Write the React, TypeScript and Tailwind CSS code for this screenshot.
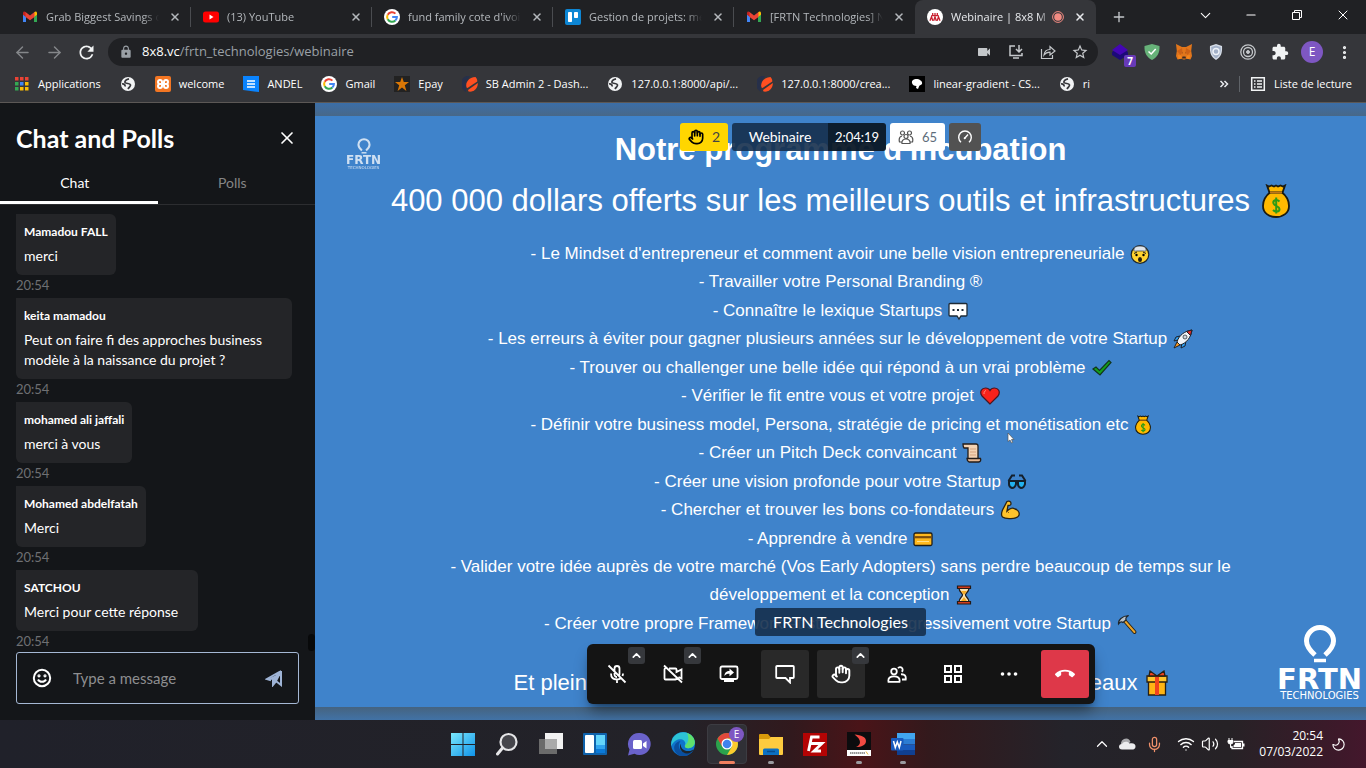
import React, { type ReactNode } from "react";
import {
  ArrowLeft,
  ArrowRight,
  ChevronDown,
  ChevronUp,
  Hand,
  Mic,
  Minus,
  Moon,
  MoreVertical,
  Plus,
  Volume2,
  Wifi,
  X,
} from "lucide-react";
import {
  MdCallEnd,
  MdExtension,
  MdLock,
  MdOutlineStarBorder,
  MdRefresh,
  MdVideocam,
} from "react-icons/md";

/* ---------- Favicons ---------- */

const GmailIcon = () => (
  <svg viewBox="0 0 16 16" className="size-4 shrink-0">
    <path d="M1 4v9h3V7.2L1.2 5z" fill="#4285f4" />
    <path d="M15 4v9h-3V7.2L14.8 5z" fill="#34a853" />
    <path d="M12 3.6V8l3-2.3V4c0-1.5-1.6-2-2.5-1z" fill="#fbbc04" />
    <path d="M4 3.6V8L1 5.700V4c0-1.500 1.600-2 2.500-1z" fill="#c5221f" />
    <path d="M3.500 3.100 8 6.500l4.500-3.400V8L8 11.200 3.500 8z" fill="#ea4335" />
  </svg>
);

const YoutubeIcon = () => (
  <svg viewBox="0 0 16 16" className="size-4 shrink-0">
    <rect x="0" y="2.500" width="16" height="11" rx="2.500" fill="#f00" />
    <path d="M6.500 5.600v4.800l4-2.400z" fill="#fff" />
  </svg>
);

const GoogleIcon = () => (
  <svg viewBox="0 0 16 16" className="size-4 shrink-0">
    <circle cx="8" cy="8" r="8" fill="#fff" />
    <g fill="none" strokeWidth="2">
      <path d="M11.400 4.600A4.900 4.900 0 0 0 3.700 5.800" stroke="#ea4335" />
      <path d="M3.700 5.700a4.900 4.900 0 0 0 0 4.600" stroke="#fbbc05" />
      <path d="M3.700 10.200a4.900 4.900 0 0 0 7.700 1.300" stroke="#34a853" />
      <path d="M11.300 11.600A4.800 4.800 0 0 0 12.900 8H8.200" stroke="#4285f4" />
    </g>
  </svg>
);

const TrelloIcon = () => (
  <svg viewBox="0 0 16 16" className="size-4 shrink-0">
    <rect width="16" height="16" rx="2" fill="#0d86d4" />
    <rect x="3" y="3" width="4" height="10" rx="0.800" fill="#fff" />
    <rect x="9" y="3" width="4" height="6" rx="0.800" fill="#fff" />
  </svg>
);

const EightIcon = () => (
  <svg viewBox="0 0 16 16" className="size-4 shrink-0">
    <circle cx="8" cy="8" r="8" fill="#fff" />
    <g stroke="#c8202f" strokeWidth="1.300" fill="none">
      <path d="M3 11.800l1.500-4 1.300 4M6.700 11.800l1.300-4 1.300 4M10.200 11.800l1.300-4 1.500 4" />
      <path d="M5.700 4v2.200M8 4v2.200M10.300 4v2.200M4.500 6.700h7" />
    </g>
  </svg>
);

const GlobeIcon = () => (
  <svg viewBox="0 0 16 16" className="size-4 shrink-0">
    <circle cx="8" cy="8" r="7" fill="#f1f3f4" />
    <path
      d="M9 2.800C6 3.500 4.500 5 5 6.500c1.500 1.500 5 .5 5.500 2.500.3 1.500-1.500 2-2.500 4M2 8c2-.5 3.500 1 3 2.500"
      fill="none"
      stroke="#35363a"
      strokeWidth="1.700"
    />
  </svg>
);

const AppsIcon = () => {
  const colors = ["#ea4335", "#ea4335", "#ea4335", "#34a853", "#4285f4", "#fbbc05", "#34a853", "#fbbc05", "#fbbc05"];
  return (
    <svg viewBox="0 0 16 16" className="size-4 shrink-0">
      {colors.map((c, i) => (
        <rect key={i} x={1 + (i % 3) * 5} y={1 + Math.floor(i / 3) * 5} width="3.500" height="3.500" fill={c} />
      ))}
    </svg>
  );
};

const XamppIcon = () => (
  <svg viewBox="0 0 16 16" className="size-4 shrink-0">
    <rect width="16" height="16" rx="2" fill="#f37623" />
    <path
      d="M6.500 8H5a2 2 0 1 1 2-2v4a2 2 0 1 1-2-2M9.500 8H11a2 2 0 1 0-2-2v4a2 2 0 1 0 2-2M6 8h4"
      fill="none"
      stroke="#fff"
      strokeWidth="2"
    />
  </svg>
);

const AndelIcon = () => (
  <svg viewBox="0 0 16 16" className="size-4 shrink-0">
    <path d="M0 0h16v16L0 14z" fill="#0a84ff" />
    <path d="M4 5h8M4 8h8M4 11h8" stroke="#fff" strokeWidth="1.500" />
  </svg>
);

const EpayIcon = () => (
  <svg viewBox="0 0 16 16" className="size-4 shrink-0">
    <rect width="16" height="16" fill="#222" />
    <path d="M8 1l1.800 5H15l-4.200 3.200L12.400 15 8 11.400 3.600 15l1.600-5.800L1 6h5.200z" fill="#d97706" />
  </svg>
);

const LeafIcon = () => (
  <svg viewBox="0 0 16 16" className="size-4 shrink-0">
    <path d="M3 14A7.500 7.500 0 0 1 6.500.5C4 4 3 9 3 14z" fill="#27304a" stroke="#27304a" strokeWidth="2" />
    <path d="M4.500 11.500C3 6 7 1.500 13.500 1c1.500 1.500 1.800 3 1.800 4.500L5.500 12z" fill="#ff4f21" />
    <path d="M6 14 15.800 7c.3 5-3.800 9.500-9.300 8.600z" fill="#ff4f21" />
  </svg>
);

const LambIcon = () => (
  <svg viewBox="0 0 16 16" className="size-4 shrink-0">
    <rect width="16" height="16" fill="#000" />
    <path d="M3 7c-.5-3 2-4 4.500-4S14 5 13 8c-1 1.500-3 1-3 2.500L9 13l-2-1 .5-2C5 10 3.500 9 3 7z" fill="#fff" />
  </svg>
);

/* ---------- Browser chrome ---------- */

type Tab = { icon: ReactNode; title: string; active?: boolean };

const tabs: Tab[] = [
  { icon: <GmailIcon />, title: "Grab Biggest Savings o" },
  { icon: <YoutubeIcon />, title: "(13) YouTube" },
  { icon: <GoogleIcon />, title: "fund family cote d'ivoi" },
  { icon: <TrelloIcon />, title: "Gestion de projets: mé" },
  { icon: <GmailIcon />, title: "[FRTN Technologies] N" },
  { icon: <EightIcon />, title: "Webinaire | 8x8 M", active: true },
];

const RecordDot = () => (
  <svg viewBox="0 0 12 12" className="size-3 shrink-0">
    <circle cx="6" cy="6" r="5.400" fill="none" stroke="#f28b82" />
    <circle cx="6" cy="6" r="3.800" fill="#f28b82" />
  </svg>
);

const TabStrip = () => (
  <div className="flex h-[34px] bg-[#202124] pl-[10px]">
    <div role="tablist" className="flex min-w-0">
      {tabs.map((t, i) => (
        <div
          key={i}
          className={
            t.active
              ? "flex w-[181px] items-center rounded-t-lg bg-[#35363a] pl-3 pr-2 text-[#e8eaed]"
              : "flex w-[181px] items-center pl-3 text-[#b4b8bc]"
          }
        >
          {t.icon}
          <button
            role="tab"
            aria-selected={!!t.active}
            className="ml-2 min-w-0 flex-1 whitespace-nowrap text-left text-[11px] leading-5 [mask-image:linear-gradient(to_right,black_86%,transparent)]"
          >
            {t.title}
          </button>
          {t.active && <RecordDot />}
          <button aria-label="Fermer l'onglet" className="ml-2 flex size-4 items-center justify-center">
            <X size={12} strokeWidth={3} />
          </button>
          {!t.active && <span className={i < 4 ? "ml-[7px] h-5 w-px bg-[#4a4c50]" : "ml-[7px] h-5 w-px"} />}
        </div>
      ))}
    </div>
    <button aria-label="Nouvel onglet" className="ml-[15px] text-[#c4c7ca]">
      <Plus size={16} />
    </button>
    <div className="ml-auto flex items-center pb-1 text-white">
      <button aria-label="Rechercher" className="flex w-[46px] justify-center"><ChevronDown size={17} strokeWidth={1.500} /></button>
      <button aria-label="Réduire" className="flex w-[46px] justify-center"><Minus size={14} strokeWidth={2} /></button>
      <button aria-label="Restaurer" className="flex w-[46px] justify-center">
        <svg viewBox="0 0 12 12" className="size-3" fill="none" stroke="currentColor">
          <path d="M1.500 3.500h7v7h-7zM3.500 3.500v-2h7v7h-2" />
        </svg>
      </button>
      <button aria-label="Fermer" className="flex w-[46px] justify-center"><X size={16} strokeWidth={1.500} /></button>
    </div>
  </div>
);

const DownloadIcon = () => (
  <svg viewBox="0 0 16 16" className="size-4" fill="none" stroke="currentColor" strokeWidth="1.500">
    <path d="M7 2H2v9.500h12V9M5 14h6M11 1v6.500M8 5l3 3 3-3" />
  </svg>
);

const ShareIcon = () => (
  <svg viewBox="0 0 16 16" className="size-4" fill="none" stroke="currentColor" strokeWidth="1.200">
    <path d="M1.500 5v9.500h11V11" />
    <path d="M4 11c.5-4 3-5.500 6-5.500V2.500l5 4.500-5 4V8.200C7.500 8.200 5.500 9 4 11z" />
  </svg>
);

const extensions: { name: string; icon: ReactNode }[] = [
  {
    name: "Calques",
    icon: (
      <span className="relative">
        <svg viewBox="0 0 18 18" className="size-[18px]">
          <path d="M1 9l8-5 8 5v3l-8 5-8-5z" fill="#1c0a78" />
          <path d="M1 7l8-6 8 6-8 5z" fill="#4406b4" />
        </svg>
        <span className="absolute -bottom-[6px] -right-[7px] flex h-3 w-3 items-center justify-center rounded-xs bg-[#673ab7] text-[10px] font-bold text-white">
          7
        </span>
      </span>
    ),
  },
  {
    name: "AdGuard",
    icon: (
      <svg viewBox="0 0 16 16" className="size-4">
        <path d="M8 0l7.500 2C16 9 13 13.500 8 16 3 13.500 0 9 .5 2z" fill="#67b279" />
        <path d="M4.500 7.500 7.200 10l4.500-5" fill="none" stroke="#fff" strokeWidth="1.500" />
      </svg>
    ),
  },
  {
    name: "MetaMask",
    icon: (
      <svg viewBox="0 0 16 16" className="size-4">
        <path d="M0 0l6 3h4l6-3-.8 7 .8 5-1.500 3.500-4-1-1.500 1H7l-1.500-1-4 1L0 12l.8-5z" fill="#e2761b" />
        <path d="M2 11l3 .5 1 3-3.500.8zM14 11l-3 .5-1 3 3.500.8z" fill="#f6851b" />
        <path d="M4.500 8l2 .5.300 1zM11.500 8l-2 .5-.3 1zM6.500 12.500h3l.500 2h-4z" fill="#3b2a24" />
        <path d="M1 7l5-3 .5 4.500-2 2.500zM15 7l-5-3-.5 4.500 2 2.500z" fill="#cd6116" />
      </svg>
    ),
  },
  {
    name: "Protection",
    icon: (
      <svg viewBox="0 0 16 16" className="size-4">
        <path d="M8 0l6 2c.5 7-1 11-6 14C3 13 1.500 9 2 2z" fill="#d5dce6" />
        <path d="M8 1.500l4.700 1.500c.3 5.500-1 9-4.700 11.300-3.700-2.300-5-5.800-4.700-11.300z" fill="#a3b1c8" />
        <circle cx="8" cy="7.500" r="3" fill="none" stroke="#eef2f8" strokeWidth="1.500" />
      </svg>
    ),
  },
  {
    name: "Cible",
    icon: (
      <svg viewBox="0 0 16 16" className="size-4" fill="none" stroke="#c4c7ca">
        <circle cx="8" cy="8" r="7.200" strokeWidth="1.300" />
        <circle cx="8" cy="8" r="4.500" strokeWidth="1.300" />
        <circle cx="8" cy="8" r="1.500" fill="#c4c7ca" />
      </svg>
    ),
  },
  { name: "Extensions", icon: <MdExtension size={18} className="text-[#f1f3f4]" /> },
];

const AddressRow = () => (
  <div className="flex h-9 items-center px-[6px] text-[#c4c7ca]">
    <button aria-label="Précédent" className="flex w-8 justify-center text-[#85878a]"><ArrowLeft size={19} strokeWidth={1.800} /></button>
    <button aria-label="Suivant" className="flex w-8 justify-center text-[#85878a]"><ArrowRight size={19} strokeWidth={1.800} /></button>
    <button aria-label="Actualiser" className="flex w-8 justify-center text-[#f1f3f4]"><MdRefresh size={21} /></button>
    <div className="mx-[6px] flex h-7 min-w-0 flex-1 items-center rounded-full bg-[#202124] pl-[11px] pr-[2px]">
      <MdLock size={14} className="shrink-0 text-[#9aa0a6]" />
      <a
        href="https://8x8.vc/frtn_technologies/webinaire"
        className="ml-[9px] flex-1 truncate text-[13px] text-[#9aa0a6]"
      >
        <span className="text-white">8x8.vc</span>/frtn_technologies/webinaire
      </a>
      <button aria-label="Caméra" className="flex w-8 justify-center"><MdVideocam size={16} /></button>
      <button aria-label="Installer" className="flex w-8 justify-center"><DownloadIcon /></button>
      <button aria-label="Partager" className="flex w-8 justify-center"><ShareIcon /></button>
      <button aria-label="Favori" className="flex w-8 justify-center"><MdOutlineStarBorder size={18} /></button>
    </div>
    {extensions.map((e) => (
      <button key={e.name} aria-label={e.name} className="flex w-8 justify-center">{e.icon}</button>
    ))}
    <button aria-label="Profil" className="flex w-8 justify-center">
      <span className="flex size-[22px] items-center justify-center rounded-full bg-[#7e57c2] text-[12px] text-white">E</span>
    </button>
    <button aria-label="Menu" className="flex w-8 justify-center text-[#f1f3f4]"><MoreVertical size={17} strokeWidth={2.500} /></button>
  </div>
);

const bookmarks: { icon: ReactNode; label: string }[] = [
  { icon: <AppsIcon />, label: "Applications" },
  { icon: <GlobeIcon />, label: "" },
  { icon: <XamppIcon />, label: "welcome" },
  { icon: <AndelIcon />, label: "ANDEL" },
  { icon: <GoogleIcon />, label: "Gmail" },
  { icon: <EpayIcon />, label: "Epay" },
  { icon: <LeafIcon />, label: "SB Admin 2 - Dash..." },
  { icon: <GlobeIcon />, label: "127.0.0.1:8000/api/..." },
  { icon: <LeafIcon />, label: "127.0.0.1:8000/crea..." },
  { icon: <LambIcon />, label: "linear-gradient - CS..." },
  { icon: <GlobeIcon />, label: "ri" },
];

const BookmarkBar = () => (
  <nav className="flex h-8 items-center gap-[19px] px-[14px] pb-1 text-[11px] text-white">
    {bookmarks.map((b, i) => (
      <a key={i} href="#" aria-label={b.label || "Favori"} className="flex items-center gap-2 whitespace-nowrap">
        {b.icon}
        {b.label && <span>{b.label}</span>}
      </a>
    ))}
    <div className="ml-auto flex items-center">
      <button aria-label="Autres favoris">
        <svg viewBox="0 0 10 10" className="size-[10px]" fill="none" stroke="#e8eaed" strokeWidth="1.500">
          <path d="M1.500 2l3 3-3 3M5.500 2l3 3-3 3" />
        </svg>
      </button>
      <span className="ml-[10px] h-4 w-px bg-[#5f6368]" />
      <a href="#" className="ml-[10px] flex items-center gap-2 whitespace-nowrap">
        <svg viewBox="0 0 16 16" className="size-4" fill="none" stroke="#f1f3f4" strokeWidth="1.500">
          <path d="M1.700 1.700h12.600v12.600H1.700zM4 5h1.500M4 8h1.500M4 11h1.500M7 5h5M7 8h5M7 11h5" />
        </svg>
        Liste de lecture
      </a>
    </div>
  </nav>
);

/* ---------- Chat ---------- */

const messages = [
  { name: "Mamadou FALL", text: "merci" },
  { name: "keita mamadou", text: "Peut on faire fi des approches business modèle à la naissance du projet ?" },
  { name: "mohamed ali jaffali", text: "merci à vous" },
  { name: "Mohamed abdelfatah", text: "Merci" },
  { name: "SATCHOU", text: "Merci pour cette réponse" },
];

const ChatPanel = () => (
  <aside className="flex min-h-0 w-[315px] shrink-0 flex-col bg-[#141619] font-[Lato,sans-serif] text-white">
    <header className="flex h-[70px] items-center justify-between pl-4 pr-[18px]">
      <h2 className="text-[25px] font-bold leading-8">Chat and Polls</h2>
      <button aria-label="Fermer le chat"><X size={20} strokeWidth={2} /></button>
    </header>
    <div role="tablist" className="flex h-8 border-b border-[#2c2d30] text-[14px]">
      <button role="tab" aria-selected className="w-1/2 border-b-[3px] border-white pb-[10px] pr-2 leading-5">Chat</button>
      <button role="tab" aria-selected={false} className="w-1/2 pb-[13px] pr-2 leading-5 text-[#858585]">Polls</button>
    </div>
    <div className="flex min-h-0 flex-1">
      <ul className="min-h-0 flex-1 overflow-hidden pl-4 pt-[9px]">
        {messages.map((m) => (
          <li key={m.name} className="flex flex-col items-start">
            <div className="max-w-[276px] rounded-r-md rounded-bl-md bg-[#242528] px-2 pb-[9px] pt-2">
              <p className="pb-1 text-[12px] font-bold leading-5">{m.name}</p>
              <p className="pr-3 text-[14px] leading-5">{m.text}</p>
            </div>
            <time className="h-[23px] text-[13px] leading-5 text-[#6f7073]">20:54</time>
          </li>
        ))}
      </ul>
      <div className="mb-px h-[17px] w-[7px] self-end rounded-full bg-[#08090a]" />
    </div>
    <form className="mx-4 mb-4 flex h-[52px] shrink-0 items-center rounded-[3px] border border-[#a5b8d4] px-[15px]">
      <button type="button" aria-label="Emoji">
        <svg viewBox="0 0 20 20" className="size-5" fill="none" stroke="#fff" strokeWidth="2">
          <circle cx="10" cy="10" r="8.200" />
          <path d="M6 11.500c1.500 3 6.500 3 8 0" />
          <circle cx="7" cy="7.800" r="0.600" />
          <circle cx="13" cy="7.800" r="0.600" />
        </svg>
      </button>
      <input
        aria-label="Message"
        placeholder="Type a message"
        className="ml-[21px] min-w-0 flex-1 bg-transparent text-[15px] outline-none placeholder:text-[#8e8e90]"
      />
      <button aria-label="Envoyer">
        <svg viewBox="0 0 18 18" className="size-[18px]" fill="none" stroke="#9fb4d6" strokeWidth="2">
          <path d="M16 2v14l-4.500-3.500M16 2 2 10l4 1.200M16 2 10.500 13 8 16V11z" />
          <path d="M2 10l6 1v5l2.500-3L14 5z" fill="#9fb4d6" stroke="none" />
        </svg>
      </button>
    </form>
  </aside>
);

/* ---------- Slide pictograms ---------- */

const MoneyBag = ({ large }: { large?: boolean }) => (
  <svg viewBox="0 0 28 34" className={large ? "h-[34px] w-7 shrink-0" : "h-5 w-4 shrink-0"} stroke="#1b1b10" strokeWidth="1.800">
    <path d="M8.500 8C2 13 1 19 1 22c0 7 6 11 13 11s13-4 13-11c0-3-1-9-7.500-14z" fill="#ffb900" />
    <path d="M5 1.500l2 1 2.500-1L12 2.500l2-1 2 1 2.500-1 2.500 1 2-1-2.500 7h-13z" fill="#ffb900" />
    <path d="M8 8.500h12" stroke="#c0741a" strokeWidth="1.500" />
    <path d="M17.500 17.500c-3-3-7-1-6 2s6 2.500 6 5.500-4 3.500-6.500 1M14.200 13.500v16" fill="none" stroke="#2c9a16" strokeWidth="2" />
  </svg>
);

const pictos = {
  mind: (
    <svg viewBox="0 0 20 20" className="size-5 shrink-0">
      <circle cx="10" cy="10.500" r="8.800" fill="#ffd22e" stroke="#1c2730" strokeWidth="1.200" />
      <path d="M4 5C4 1 16 1 16 5c1 3-2 2-3 2H7C6 7 3 8 4 5z" fill="#dfe5ec" stroke="#37434f" strokeWidth="0.800" />
      <path d="M4 9.500l3-1.500M16 9.500l-3-1.500" stroke="#1c1c1c" />
      <circle cx="6.500" cy="11" r="1.200" />
      <circle cx="13.500" cy="11" r="1.200" />
      <ellipse cx="10" cy="15.500" rx="2" ry="2.500" fill="#221a10" />
    </svg>
  ),
  speech: (
    <svg viewBox="0 0 20 20" className="size-5 shrink-0">
      <path d="M2 2.500h16q1 0 1 1V14q0 1-1 1h-5l-2 3-2-3H2q-1 0-1-1V3.500q0-1 1-1z" fill="#fff" stroke="#1d2a36" strokeWidth="1.300" />
      <path d="M4.500 8h2v2h-2zM9 8h2v2H9zM13.500 8h2v2h-2z" fill="#1d2a36" />
    </svg>
  ),
  rocket: (
    <svg viewBox="0 0 20 20" className="size-5 shrink-0" stroke="#1b222b" strokeWidth="1">
      <path d="M7 7 3 8l-2 4 4-1zM13 12l-1 5-4 2 1-5z" fill="#2f9df0" />
      <path d="M4 13l-3 6 6-3z" fill="#ff9a1f" />
      <path d="M4 13C6 6 12 2 19 1c-1 7-5 13-12 15z" fill="#f3f5f8" />
      <path d="M13.500 2.500 19 1l-1.500 5.500z" fill="#e92b2b" />
      <circle cx="12" cy="8" r="2" fill="#cfd6de" strokeWidth="0.700" />
    </svg>
  ),
  check: (
    <svg viewBox="0 0 20 20" className="size-5 shrink-0">
      <path d="M1 11l3-2 3.500 3.500L17 2.500l2 2L8 17z" fill="#14a01c" stroke="#12351c" strokeWidth="1.200" />
    </svg>
  ),
  heart: (
    <svg viewBox="0 0 20 20" className="size-5 shrink-0">
      <path d="M10 18 2 10C-1 5.500 2 2 5.500 2 8 2 9.500 3.500 10 4.500 10.500 3.500 12 2 14.500 2 18 2 21 5.500 18 10z" fill="#f8221c" stroke="#4a1620" strokeWidth="1.200" />
      <path d="M4 8c0-2 .5-3 2-3.500" stroke="#ff8d80" fill="none" />
    </svg>
  ),
  bag: <MoneyBag />,
  scroll: (
    <svg viewBox="0 0 20 20" className="size-5 shrink-0" stroke="#241c18" strokeWidth="1.300">
      <path d="M1 1h13q2 0 2 2v13H6V5H2Q1 4 1 1z" fill="#f4d3b4" />
      <path d="M5 15.500h13.500q1 3-2 3.500H7q-2-1-2-3.500z" fill="#e7b892" />
      <path d="M8 6h6M8 9h6M8 12h6" stroke="#c9936b" strokeWidth="0.700" />
    </svg>
  ),
  glasses: (
    <svg viewBox="0 0 20 20" className="size-5 shrink-0" stroke="#14202c" strokeWidth="2">
      <path d="M1.500 9 5 3.500h3M18.500 9 15 3.500h-3M1 9h18" fill="none" />
      <path d="M2 9h7v3q-1 4-4 4-3-1-3-4zM11 9h7v3q-1 4-4 4-3-1-3-4z" fill="#22b2ef" />
    </svg>
  ),
  arm: (
    <svg viewBox="0 0 20 20" className="size-5 shrink-0">
      <path d="M7 1.500c2-1 4 0 4 2s-1 2-3 2L7 11c2-2 5-4 8-2 4 1 5 5 3.500 7-2 3-13 3.500-16 1-2-2-1-4 0-7z" fill="#ffc32b" stroke="#2a2315" strokeWidth="1.300" />
      <path d="M7 11l2 2" stroke="#8a5a10" />
    </svg>
  ),
  card: (
    <svg viewBox="0 0 20 20" className="size-5 shrink-0">
      <rect x="1" y="4" width="18" height="12.500" rx="1.500" fill="#ffb91e" stroke="#1f1c16" strokeWidth="1.300" />
      <path d="M1.500 8.200h17" stroke="#7a4b0c" strokeWidth="2.200" />
      <path d="M4 12.500h12" stroke="#ffe08a" />
    </svg>
  ),
  hourglass: (
    <svg viewBox="0 0 16 20" className="h-5 w-4 shrink-0" stroke="#241a16" strokeWidth="1.200">
      <path d="M3 3h10c0 4-3.500 5-3.500 7s3.500 3 3.500 7H3c0-4 3.500-5 3.500-7S3 7 3 3z" fill="#fbe3b0" />
      <path d="M5 6h6l-3 4zM5 16l3-4 3 4z" fill="#f5ab26" stroke="none" />
      <path d="M1.500 1h13v2.500h-13zM1.500 16.500h13V19h-13z" fill="#cf3b1c" />
    </svg>
  ),
  hammer: (
    <svg viewBox="0 0 20 20" className="size-5 shrink-0" strokeLinecap="round">
      <path d="M7 6l10.500 12" stroke="#2a2315" strokeWidth="3.800" />
      <path d="M7 6l10.500 12" stroke="#eba42a" strokeWidth="1.900" />
      <path d="M1.500 10C1 6 5 2 11.500 1.500 9 3 8.500 4.500 9 6L6 8.500C4.500 7 3 8 1.500 10z" fill="#b8c1ca" stroke="#1f262c" strokeWidth="1.200" />
    </svg>
  ),
};

const GiftIcon = () => (
  <svg viewBox="0 0 22 26" className="h-[26px] w-[22px] shrink-0" stroke="#2a1f12" strokeWidth="1.300">
    <path d="M2.500 10h17v15h-17z" fill="#ffb514" />
    <path d="M1 6h20v6H1z" fill="#ffc52c" />
    <path d="M9 6.500h4V25H9z" fill="#f0431e" stroke="none" />
    <path d="M11 6 4 1 3 6zM11 6l7-5 1 5z" fill="#f0431e" />
  </svg>
);

/* ---------- Slide ---------- */

const lines: { text: string; picto?: ReactNode }[] = [
  { text: "- Le Mindset d'entrepreneur et comment avoir une belle vision entrepreneuriale", picto: pictos.mind },
  { text: "- Travailler votre Personal Branding ®" },
  { text: "- Connaître le lexique Startups", picto: pictos.speech },
  { text: "- Les erreurs à éviter pour gagner plusieurs années sur le développement de votre Startup", picto: pictos.rocket },
  { text: "- Trouver ou challenger une belle idée qui répond à un vrai problème", picto: pictos.check },
  { text: "- Vérifier le fit entre vous et votre projet", picto: pictos.heart },
  { text: "- Définir votre business model, Persona, stratégie de pricing et monétisation etc", picto: pictos.bag },
  { text: "- Créer un Pitch Deck convaincant", picto: pictos.scroll },
  { text: "- Créer une vision profonde pour votre Startup", picto: pictos.glasses },
  { text: "- Chercher et trouver les bons co-fondateurs", picto: pictos.arm },
  { text: "- Apprendre à vendre", picto: pictos.card },
  { text: "- Valider votre idée auprès de votre marché (Vos Early Adopters) sans perdre beaucoup de temps sur le" },
  { text: "développement et la conception", picto: pictos.hourglass },
  { text: "- Créer votre propre Framework et structurer progressivement votre Startup", picto: pictos.hammer },
];

const Bulb = ({ small }: { small?: boolean }) => (
  <svg viewBox="0 0 34 38" className={small ? "h-4 w-[14px]" : "h-[38px] w-[34px]"} fill="none" stroke="#fff">
    <path d="M12 30C7 25.500 3.500 21.500 3.500 16a13.500 13.500 0 0 1 27 0c0 5.500-3.500 9.500-8.500 14" strokeWidth="5" />
    <path d="M11 35.500h12" strokeWidth="3.500" />
  </svg>
);

const Slide = () => (
  <div className="relative flex flex-1 flex-col items-center bg-[#3f83cb] pt-4 font-[Liberation_Sans,Arial,sans-serif] text-white">
    <h1 className="text-[31px] font-bold leading-9">Notre programme d'incubation</h1>
    <h2 className="mt-[15px] flex items-center gap-3 whitespace-nowrap text-[31px] leading-9">
      400 000 dollars offerts sur les meilleurs outils et infrastructures <MoneyBag large />
    </h2>
    <ul className="mt-[21px] flex h-[398px] flex-col justify-between text-[17px] leading-7">
      {lines.map((l) => (
        <li key={l.text} className="flex items-center justify-center gap-[6px] whitespace-nowrap">
          {l.text}
          {l.picto}
        </li>
      ))}
    </ul>
    <p className="mt-[29px] flex w-[654px] justify-between text-[22px] leading-8">
      <span>Et plein</span>
      <span className="flex items-center gap-2">
        eaux <GiftIcon />
      </span>
    </p>

    <div className="absolute left-[31px] top-[22px] flex flex-col items-center opacity-75">
      <Bulb small />
      <span className="mt-[2px] font-[DejaVu_Sans,sans-serif] text-[12px] font-bold leading-[9px]">FRTN</span>
      <span className="font-[DejaVu_Sans,sans-serif] text-[4px] leading-[5px]">TECHNOLOGIES</span>
    </div>
    <div className="absolute bottom-[6px] right-1 flex flex-col items-center">
      <Bulb />
      <span className="mt-[5px] font-[DejaVu_Sans,sans-serif] text-[29px] font-bold leading-[22px]">FRTN</span>
      <span className="font-[DejaVu_Sans,sans-serif] text-[10px] leading-[11px]">TECHNOLOGIES</span>
    </div>
    <svg viewBox="0 0 8 12" className="absolute left-[692px] top-[316px] h-3 w-2">
      <path d="M1 1v8.500l2-1.500 1.500 3 1.200-.6L4.500 7.500H7z" fill="#fff" stroke="#555" strokeWidth="0.700" />
    </svg>
  </div>
);

/* ---------- Meeting controls ---------- */

const MicMuted = () => (
  <svg viewBox="0 0 20 20" className="size-5" fill="none" stroke="currentColor" strokeWidth="1.800">
    <path d="M7.500 7V4.500a2.500 2.500 0 0 1 5 0V10q0 1-.5 1.500M7.500 9v1.500A2.500 2.500 0 0 0 10 13M4 9.500c0 4 2.500 6 6 6 1.500 0 2.800-.4 3.800-1.200M16 9.500q0 1.300-.5 2.500M10 15.500V19M1.500 1.500l17 17" />
  </svg>
);
const CameraOff = () => (
  <svg viewBox="0 0 20 20" className="size-5" fill="none" stroke="currentColor" strokeWidth="1.800">
    <path d="M6 4.500h6.500q1 0 1 1V8L18.500 5.500v9L15.500 13M13.500 12.500v2q0 1-1 1h-10q-1 0-1-1v-9q0-1 1-1M1 1.500l18 17" />
  </svg>
);
const ScreenShare = () => (
  <svg viewBox="0 0 20 20" className="size-5">
    <rect x="1.500" y="2.500" width="17" height="12.500" rx="1.500" fill="none" stroke="currentColor" strokeWidth="1.800" />
    <path d="M5 16h10v2H5z" fill="currentColor" />
    <path d="M5.500 12c0-3.500 2-5 5-5V4.500L15 8.500l-4.500 3.700V9.800c-2.500 0-4 .5-5 2.200z" fill="currentColor" />
  </svg>
);
const ChatBubble = () => (
  <svg viewBox="0 0 20 20" className="size-5" fill="none" stroke="currentColor" strokeWidth="1.800">
    <path d="M2 2h16q.8 0 .8.800V13.200q0 .8-.8.800h-3v4.500L10.500 14H2q-.8 0-.8-.8V2.800Q1.200 2 2 2z" />
  </svg>
);
const People = () => (
  <svg viewBox="0 0 20 20" className="size-5" fill="none" stroke="currentColor" strokeWidth="1.800">
    <circle cx="7" cy="7.500" r="2.800" />
    <path d="M1.500 17.800c-.8-4 2.200-5.500 5.500-5.500s6.300 1.500 5.500 5.500zM11 4.200a2.600 2.600 0 1 1 3.700 3.600M14 10.300c3.500-.3 5.300 1.700 4.700 5.200H15" />
  </svg>
);
const Tiles = () => (
  <svg viewBox="0 0 20 20" className="size-5" fill="none" stroke="currentColor" strokeWidth="2">
    <path d="M2 2h6v6H2zM12 2h6v6h-6zM2 12h6v6H2zM12 12h6v6h-6z" />
  </svg>
);
const Dots = () => (
  <svg viewBox="0 0 20 20" className="size-5" fill="currentColor">
    <circle cx="3.500" cy="10" r="1.800" />
    <circle cx="10" cy="10" r="1.800" />
    <circle cx="16.500" cy="10" r="1.800" />
  </svg>
);
const Crowd = () => (
  <svg viewBox="0 0 16 16" className="size-4" fill="none" stroke="#555" strokeWidth="1.200">
    <circle cx="4.500" cy="4" r="2" />
    <circle cx="11.500" cy="4" r="2" />
    <circle cx="8" cy="7.500" r="2" fill="#fff" />
    <path d="M3.500 13H1.500C.5 9 2 7.500 4 7M12.500 13h2C15.500 9 14 7.500 12 7M4 14.500c-.5-3 1.500-4.500 4-4.500s4.500 1.500 4 4.500z" />
  </svg>
);
const Dial = () => (
  <svg viewBox="0 0 16 16" className="size-4" fill="none" stroke="#fff" strokeWidth="1.400">
    <path d="M4 13.200a6.300 6.300 0 1 1 8 0M7.500 9.500 11 5.500" />
    <circle cx="7.700" cy="9.300" r="1" fill="#fff" stroke="none" />
  </svg>
);

type Control = { name: string; icon: ReactNode; on?: boolean; caret?: boolean; danger?: boolean };

const controls: Control[] = [
  { name: "Micro", icon: <MicMuted />, caret: true },
  { name: "Caméra", icon: <CameraOff />, caret: true },
  { name: "Partager l'écran", icon: <ScreenShare /> },
  { name: "Chat", icon: <ChatBubble />, on: true },
  { name: "Lever la main", icon: <Hand size={20} strokeWidth={2.300} />, on: true, caret: true },
  { name: "Participants", icon: <People /> },
  { name: "Mosaïque", icon: <Tiles /> },
  { name: "Plus", icon: <Dots /> },
  { name: "Raccrocher", icon: <MdCallEnd size={20} />, danger: true },
];

const Toolbox = () => (
  <div className="flex gap-2 rounded-md bg-[#141414] p-[6px] text-white shadow-lg shadow-black/40">
    {controls.map((c) => (
      <div key={c.name} className="relative">
        <button
          aria-label={c.name}
          className={
            c.danger
              ? "flex size-12 items-center justify-center rounded-[3px] bg-[#de3849]"
              : c.on
                ? "flex size-12 items-center justify-center rounded-[3px] bg-[#292929]"
                : "flex size-12 items-center justify-center rounded-[3px]"
          }
        >
          {c.icon}
        </button>
        {c.caret && (
          <button
            aria-label={`Options ${c.name}`}
            className="absolute -right-1 -top-[3px] flex size-[17px] items-center justify-center rounded-[3px] bg-[#36383c]"
          >
            <ChevronUp size={13} strokeWidth={3} />
          </button>
        )}
      </div>
    ))}
  </div>
);

const Stage = () => (
  <main className="relative flex min-w-0 flex-1 flex-col overflow-hidden">
    <div className="h-[13px] shrink-0 bg-linear-to-b from-[#3b6ea8] to-[#486888]" />
    <Slide />
    <div className="h-[13px] shrink-0 bg-linear-to-b from-[#45637f] to-[#4172a6]" />

    <div className="absolute inset-x-0 top-5 flex justify-center gap-1 pr-5 font-[Lato,sans-serif] text-[14px] leading-5">
      <div className="flex h-7 w-12 items-center justify-between rounded-[3px] bg-[#ffd600] px-2 text-[#444]">
        <Hand size={16} strokeWidth={2.500} className="text-black" /> 2
      </div>
      <div className="flex h-7 overflow-hidden rounded-[3px] text-white">
        <span className="flex w-24 items-center justify-center bg-[#152f4d]/90">Webinaire</span>
        <span className="flex w-[58px] items-center justify-center bg-[#0b1826]/95 text-[13px]">2:04:19</span>
      </div>
      <div className="flex h-7 w-[55px] items-center justify-between rounded-[3px] bg-white px-2 text-[13px] text-[#5e6d7a]">
        <Crowd /> 65
      </div>
      <div className="flex h-7 w-8 items-center justify-center rounded-[3px] bg-[#525252]">
        <Dial />
      </div>
    </div>

    <div className="absolute inset-x-0 bottom-4 flex flex-col items-center gap-2">
      <div className="flex h-7 w-[171px] items-center justify-center rounded-[3px] bg-[#152f4d]/90 font-[Lato,sans-serif] text-[16px] text-white">
        FRTN Technologies
      </div>
      <Toolbox />
    </div>
  </main>
);

/* ---------- Taskbar ---------- */

type TaskApp = { name: string; icon: ReactNode; dot?: boolean; current?: boolean };

const apps: TaskApp[] = [
  {
    name: "Démarrer",
    icon: (
      <svg viewBox="0 0 24 24" className="size-6">
        <defs>
          <linearGradient id="win" x1="0" y1="0" x2="1" y2="1">
            <stop stopColor="#7be9fd" />
            <stop offset="1" stopColor="#0f92e8" />
          </linearGradient>
        </defs>
        <path d="M0 1h11.500v11H0zM12.500 1H24v11H12.500zM0 13h11.500v11H0zM12.500 13H24v11H12.500z" fill="url(#win)" />
      </svg>
    ),
  },
  {
    name: "Rechercher",
    icon: (
      <svg viewBox="0 0 24 24" className="size-6" stroke="#e6e6e8" fill="#46464c">
        <circle cx="13.500" cy="10" r="8" strokeWidth="2.200" />
        <path d="M7.500 16 2.500 22" strokeWidth="3" strokeLinecap="round" />
      </svg>
    ),
  },
  {
    name: "Bureaux",
    icon: (
      <svg viewBox="0 0 24 24" className="size-6">
        <path d="M6 1h18v16H6z" fill="#f2f2f2" />
        <path d="M0 7h18v15H0z" fill="#6b6b6b" />
        <path d="M6 7h12v10H6z" fill="#aaa" />
      </svg>
    ),
  },
  {
    name: "Widgets",
    icon: (
      <svg viewBox="0 0 24 24" className="size-6">
        <rect y="1" width="24" height="22" rx="1" fill="#0f62ab" />
        <rect x="2" y="3" width="9" height="18" rx="1" fill="#fff" />
        <path d="M13 3h9v10h-9z" fill="#63d5fb" />
        <path d="M13 13h9v4h-9z" fill="#2fa4ef" />
        <path d="M13 17h9v4h-9z" fill="#0b7ad8" />
      </svg>
    ),
  },
  {
    name: "Conversation",
    icon: (
      <svg viewBox="0 0 24 24" className="size-6">
        <path d="M12.500 1a11 11 0 1 1-5 20.700L1 23.500l1.500-6A11 11 0 0 1 12.500 1z" fill="#6a62ca" />
        <rect x="6" y="8" width="9" height="9" rx="1.500" fill="#fff" />
        <path d="M16 11.500 19.500 9v7.500L16 14z" fill="#fff" />
      </svg>
    ),
  },
  {
    name: "Edge",
    icon: (
      <svg viewBox="0 0 24 24" className="size-6">
        <circle cx="12" cy="12" r="12" fill="#0f74cc" />
        <path d="M1 8C4-1 17-3 22.500 6c3 6 0 9-3.500 10-4 1-6-1-5-3 1.500-3-2-7-7-5.500C4 8.500 1.500 11 .300 14 0 12 .3 10 1 8z" fill="#2cc3d5" />
        <path d="M16 1C23 3 25 10 23 13c-2 3.500-7 4-8.500 2.500-1-.8-.5-1.500 0-2.500C18 10 18 5 16 1z" fill="#5fe06d" />
        <path d="M9.500 9C6 13 8 20 15 21c2.500.3 5-.7 7-2.500C19 24 12 26 6.500 22.500 0 17 4 9.500 9.500 9z" fill="#0a4fa0" />
        <path d="M10 12c-1 4 3 7.500 8 7 2 0 3-.6 4.500-1.500C21 21 16 22.500 12.500 20.500 9 18.500 8 14 10 12z" fill="#1d242c" />
      </svg>
    ),
  },
  {
    name: "Chrome",
    current: true,
    icon: (
      <span className="relative">
        <svg viewBox="0 0 24 24" className="size-6">
          <circle cx="12" cy="12" r="11" fill="#2ba24c" />
          <path d="M2.500 6.500A11 11 0 0 1 21.500 6.500H12L7.200 14.800z" fill="#e2493b" />
          <path d="M21.500 6.500A11 11 0 0 1 12 23l4.800-8.300L12 6.500z" fill="#fccb2e" />
          <circle cx="12" cy="12" r="5.500" fill="#fff" />
          <circle cx="12" cy="12" r="4.300" fill="#3f83ee" />
        </svg>
        <span className="absolute -right-[5px] -top-[5px] flex size-[15px] items-center justify-center rounded-full bg-[#7e57c2] text-[10px] text-white">
          E
        </span>
      </span>
    ),
  },
  {
    name: "Explorateur",
    dot: true,
    icon: (
      <svg viewBox="0 0 24 24" className="size-6">
        <path d="M0 3q0-1 1-1h8l2.500 3H24v5H0z" fill="#d99a0b" />
        <path d="M0 7h10l2-2h12v17q0 1-1 1H1q-1 0-1-1z" fill="#fdcb3f" />
        <path d="M4 23v-5q0-1.500 1.500-1.500h13Q20 16.500 20 18v5z" fill="#0c70c2" />
        <path d="M8 19.500h8" stroke="#084c8d" strokeWidth="1.500" />
      </svg>
    ),
  },
  {
    name: "FileZilla",
    icon: (
      <svg viewBox="0 0 24 24" className="size-6">
        <rect y="1" width="24" height="23" fill="#b40404" />
        <path d="M5.500 19 8.500 5h8M7 11.500h6M12 11.500h7l-8 7.500h7" fill="none" stroke="#fff" strokeWidth="2.800" />
      </svg>
    ),
  },
  {
    name: "MetaTrader",
    dot: true,
    icon: (
      <svg viewBox="0 0 24 24" className="size-6">
        <path d="M0 0h24v24H0z" fill="#0c0c0e" />
        <path d="M0 18h24v6H0z" fill="#fff" />
        <path d="M7.500 2.500C14 3 19 5 19 9s-4.500 6-10 6c2.500-1 4-2.500 4-5S11 5 7.500 2.500z" fill="#f14a42" />
        <path d="M3 21h15" stroke="#333" strokeWidth="1.200" strokeDasharray="1.500 .5" />
        <path d="M19 19.500l2 3" stroke="#e8b53a" />
      </svg>
    ),
  },
  {
    name: "Word",
    dot: true,
    icon: (
      <svg viewBox="0 0 24 24" className="size-6">
        <path d="M6 1h18v6H6z" fill="#41a5ee" />
        <path d="M6 7h18v5.500H6z" fill="#2b7cd3" />
        <path d="M6 12.500h18V18H6z" fill="#185abd" />
        <path d="M6 18h18v5H6z" fill="#103f91" />
        <rect y="6" width="12.500" height="12.500" rx="1" fill="#185abd" />
        <path d="M2.500 9l1.800 6.500L6.300 10l2 5.500L10 9" fill="none" stroke="#fff" strokeWidth="1.500" />
      </svg>
    ),
  },
];

const PluggedBattery = () => (
  <svg viewBox="0 0 18 14" className="ml-2 h-[14px] w-[18px]">
    <path d="M7 4.500h8.500v7H5V9" fill="none" stroke="#fff" strokeWidth="1.300" />
    <path d="M8 6h6v4H6.500V8.500L8 7zM16 6.500h1.500v3H16z" fill="#fff" />
    <path d="M2 1v2.500M5 1v2.500M1 3.500h5V5Q6 7 3.500 7T1 5zM3.500 7v3.500H5" fill="#fff" stroke="#fff" strokeWidth="1" />
  </svg>
);

const Taskbar = () => (
  <footer className="grid h-12 shrink-0 grid-cols-[1fr_auto_1fr] items-stretch bg-[linear-gradient(to_right,#20212a_0%,#232228_50%,#31191d_58%,#4a1418_63%,#33191c_68%,#24232a_78%,#262226_90%,#3a1a29_97%,#44172c_100%)] text-white">
    <div />
    <div className="flex">
      {apps.map((a) => (
        <button key={a.name} aria-label={a.name} className="flex w-11 flex-col items-center px-[2px] py-1">
          <span
            className={
              a.current
                ? "flex h-10 w-full flex-col items-center rounded-sm border border-[#3c3c42] bg-[#303036] pt-[7px]"
                : "flex h-10 w-full flex-col items-center pt-2"
            }
          >
            {a.icon}
            {a.current && <span className="mt-[5px] h-[3px] w-4 shrink-0 rounded-full bg-[#f0805f]" />}
            {a.dot && <span className="mt-[5px] h-[3px] w-[6px] shrink-0 rounded-full bg-[#9b9ba0]" />}
          </span>
        </button>
      ))}
    </div>
    <div className="flex items-center justify-end pr-5">
      <ChevronUp size={18} strokeWidth={1.600} />
      <svg viewBox="0 0 18 12" className="ml-[7px] h-3 w-[18px]">
        <path d="M5 9a4.500 4.500 0 0 1 1-8c3-1.500 6 .5 6.500 3z" fill="#a9a9ac" />
        <path d="M4 11.500C0 11.500 0 6 4 6c1.500-3 6-3 7.500-.5C15 4.500 18 6 17.500 9c-.3 2-2 2.500-3 2.500z" fill="#ececee" />
      </svg>
      <Mic size={17} strokeWidth={1.800} className="ml-[10px] text-[#f0906a]" />
      <Wifi size={18} strokeWidth={1.800} className="ml-[14px]" />
      <Volume2 size={18} strokeWidth={1.600} className="ml-[6px]" />
      <PluggedBattery />
      <div className="ml-[14px] text-right text-[12px] leading-4">
        <p>20:54</p>
        <p>07/03/2022</p>
      </div>
      <Moon size={15} strokeWidth={1.800} className="ml-2 -scale-x-100" />
    </div>
  </footer>
);

export default function App() {
  return (
    <div className="flex h-screen flex-col overflow-hidden font-[Open_Sans,Noto_Sans,sans-serif]">
      <div className="shrink-0 border-b border-[#5c5856] bg-[#35363a]">
        <TabStrip />
        <AddressRow />
        <BookmarkBar />
      </div>
      <div className="flex min-h-0 flex-1">
        <ChatPanel />
        <Stage />
      </div>
      <Taskbar />
    </div>
  );
}
